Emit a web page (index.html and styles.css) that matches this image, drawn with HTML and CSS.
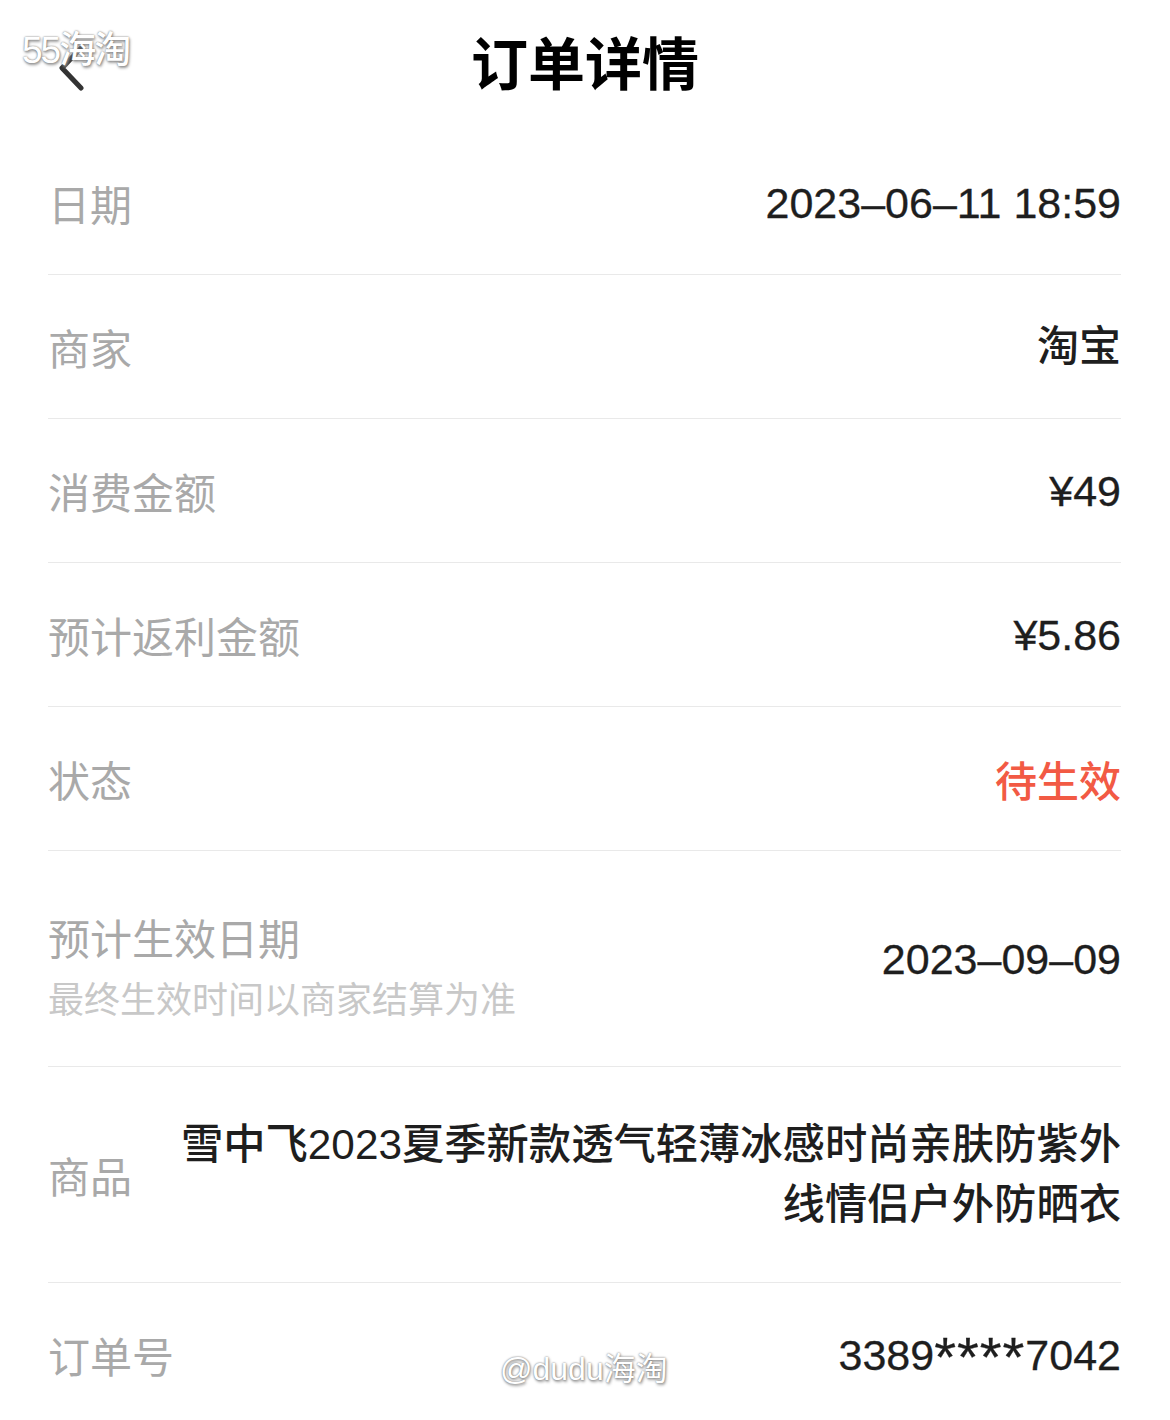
FILE: index.html
```html
<!DOCTYPE html>
<html lang="zh-CN">
<head>
<meta charset="utf-8">
<title>订单详情</title>
<link rel="stylesheet" href="styles.css">
</head>
<body>
<div class="page">
  <header class="header">
    <button class="back" aria-label="返回">
      <svg width="30" height="46" viewBox="0 0 30 46"><path d="M24 3 L5 23 L24 43" fill="none" stroke="#333" stroke-width="5" stroke-linecap="round" stroke-linejoin="round"/></svg>
    </button>
    <h1 class="title">订单详情</h1>
  </header>
  <div class="list">
    <div class="row"><span class="label">日期</span><span class="value num">2023–06–11 18:59</span></div>
    <div class="row"><span class="label">商家</span><span class="value">淘宝</span></div>
    <div class="row"><span class="label">消费金额</span><span class="value num">¥49</span></div>
    <div class="row"><span class="label">预计返利金额</span><span class="value num">¥5.86</span></div>
    <div class="row"><span class="label">状态</span><span class="value status">待生效</span></div>
    <div class="row tall">
      <div class="label-block">
        <div class="label">预计生效日期</div>
        <div class="sub">最终生效时间以商家结算为准</div>
      </div>
      <span class="value num">2023–09–09</span>
    </div>
    <div class="row tall">
      <span class="label">商品</span>
      <span class="value product">雪中飞2023夏季新款透气轻薄冰感时尚亲肤防紫外线情侣户外防晒衣</span>
    </div>
    <div class="row last"><span class="label">订单号</span><span class="value num">3389<span class="mask">****</span>7042</span></div>
  </div>
  <div class="wm wm-top">55海淘</div>
  <div class="wm wm-bottom">@dudu海淘</div>
</div>
</body>
</html>
```

FILE: styles.css
```css
html, body {
  margin: 0;
  padding: 0;
  background: #fff;
}
.page {
  position: relative;
  width: 1170px;
  height: 1420px;
  overflow: hidden;
  font-family: "Liberation Sans", "Noto Sans CJK SC", sans-serif;
}
.header {
  position: relative;
  height: 131px;
  display: flex;
  align-items: center;
  justify-content: center;
}
.back {
  position: absolute;
  left: 57px;
  top: 45px;
  padding: 0;
  border: 0;
  background: none;
  width: 30px;
  height: 46px;
}
.back svg { display: block; }
.title {
  margin: 0 0 10px 0;
  font-family: "Noto Sans CJK SC", sans-serif;
  font-size: 57px;
  font-weight: 700;
  color: #000;
  line-height: 1;
}
.list {
  padding: 0 49px 0 48px;
}
.row {
  height: 144px;
  display: flex;
  align-items: center;
  justify-content: space-between;
  border-bottom: 1px solid #e9e9e9;
  box-sizing: border-box;
}
.row.tall { height: 216px; }
.row.last { border-bottom: 0; }
.label {
  font-family: "Noto Sans CJK SC", sans-serif;
  font-size: 42px;
  color: #a9a9a9;
  line-height: 60px;
  white-space: nowrap;
}
.label-block {
  margin-top: 16px;
}
.sub {
  font-family: "Noto Sans CJK SC", sans-serif;
  font-size: 36px;
  color: #c8c8c8;
  line-height: 60px;
  white-space: nowrap;
}
.value {
  font-size: 42px;
  font-weight: 500;
  color: #1e1e1e;
  text-align: right;
  line-height: 60px;
}
.value.num {
  font-size: 43px;
  -webkit-text-stroke: 0.3px #1e1e1e;
}
.mask {
  font-size: 56px;
  letter-spacing: 1px;
  vertical-align: -6px;
  line-height: 0;
}
.status {
  color: #f25a44;
  font-family: "Noto Sans CJK SC", sans-serif;
}
.product {
  max-width: 945px;
  font-size: 42.3px;
  line-height: 60px;
}
.wm {
  position: absolute;
  color: #fff;
  font-family: "Liberation Sans", "Noto Sans CJK SC", sans-serif;
  text-shadow: 0 0 2px #666, 1px 2px 3px #999;
  white-space: nowrap;
}
.wm-top {
  left: 22px;
  top: 20px;
  font-size: 37px;
  font-weight: 500;
  letter-spacing: -2px;
}
.wm-bottom {
  left: 500px;
  top: 1343px;
  font-size: 32px;
}
```
